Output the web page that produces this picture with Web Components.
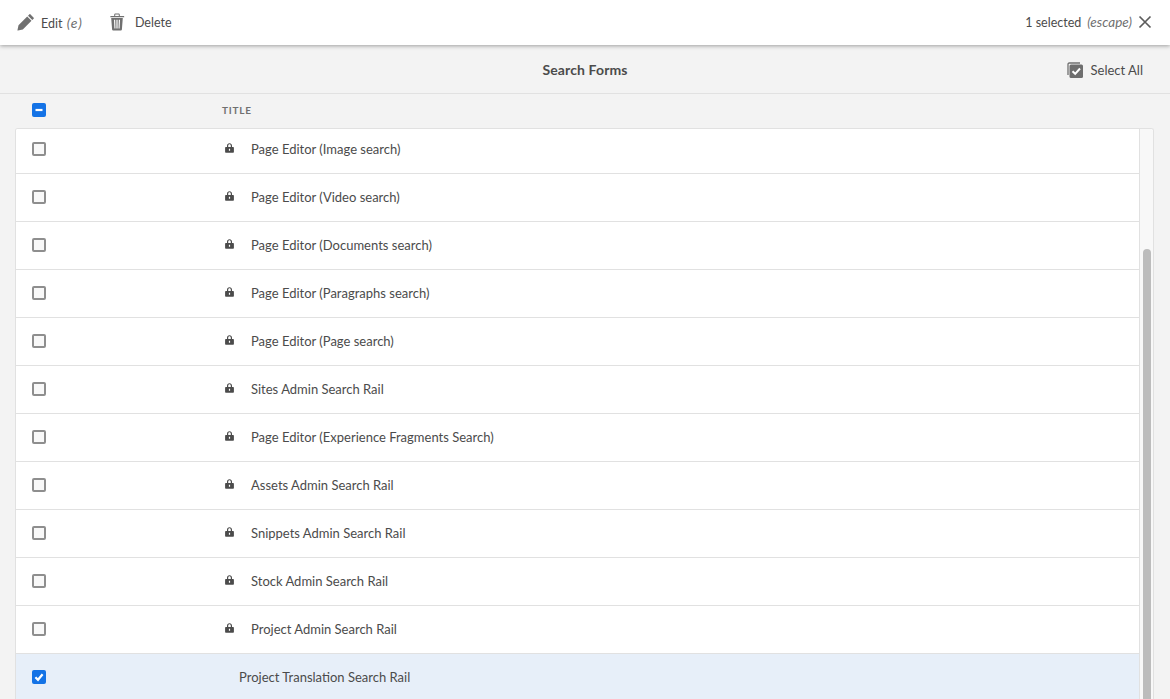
<!DOCTYPE html>
<html><head><meta charset="utf-8"><style>
html,body{margin:0;padding:0;height:699px;overflow:hidden;background:#f3f3f3;font-family:Lato,"Open Sans",sans-serif;color:#4b4b4b}
</style></head><body>
<template id="t-check"><style>
:host{display:block;width:14px;height:14px;position:relative;flex:none}
.b{box-sizing:border-box;width:14px;height:14px;border:2px solid #8e8e8e;border-radius:2px;background:#f8f8f8;display:block}
:host([state]) .b{background:#1473e6;border:none}
svg{position:absolute;left:0;top:0;display:none}
:host([state]) svg{display:block}
</style><span class="b"></span><svg width="14" height="14" viewBox="0 0 14 14"><path fill="none" stroke="#fff" stroke-width="2.2" d=""/></svg></template>
<script>
const tpl=id=>document.getElementById(id).content.cloneNode(true);
class UiCheck extends HTMLElement{connectedCallback(){if(this.shadowRoot)return;const r=this.attachShadow({mode:'open'});r.appendChild(tpl('t-check'));const s=this.getAttribute('state');if(s){r.querySelector('path').setAttribute('d',s==='mixed'?'M3.5 7H10.5':'M3.4 7.2L6 9.8L10.6 4.2');}}}
customElements.define('ui-check',UiCheck);
class UiAction extends HTMLElement{constructor(){super();this.attachShadow({mode:'open'}).innerHTML=`<style>
:host{display:inline-flex;align-items:center;gap:var(--g,6px);font-size:var(--fs,12.5px);color:#4b4b4b;white-space:nowrap}
</style><slot name="icon"></slot><span><slot></slot></span>`}}
customElements.define('ui-action',UiAction);
class ActionBar extends HTMLElement{constructor(){super();this.attachShadow({mode:'open'}).innerHTML=`<style>
:host{display:flex;align-items:center;height:45px;background:#fff;box-shadow:0 1px 4px rgba(0,0,0,.35);position:relative;z-index:2;padding:0 18px 1px 17px;box-sizing:border-box;justify-content:space-between}
.l,.r{display:flex;align-items:center}
.l{gap:25px}
.r{gap:6px;font-size:12.5px;color:#4b4b4b}
</style><div class="l"><slot name="left"></slot></div><div class="r"><slot name="right"></slot></div>`}}
customElements.define('action-bar',ActionBar);
class TitleBar extends HTMLElement{constructor(){super();this.attachShadow({mode:'open'}).innerHTML=`<style>
:host{display:grid;grid-template-columns:minmax(0,1fr) auto minmax(0,1fr);align-items:center;height:49px;box-sizing:border-box;border-bottom:1px solid #e1e1e1;background:#f3f3f3;padding:1px 27px 0}
.t{font-size:14px;font-weight:700;letter-spacing:.12px;color:#4b4b4b}
.a{justify-self:end;display:flex}
</style><span></span><span class="t"><slot></slot></span><span class="a"><slot name="action"></slot></span>`}}
customElements.define('title-bar',TitleBar);
class ColHead extends HTMLElement{constructor(){super();this.attachShadow({mode:'open'}).innerHTML=`<style>
:host{display:flex;align-items:center;height:34px;padding:0 0 2px 32px;box-sizing:border-box}
.t{margin-left:176px;font-size:10px;font-weight:700;letter-spacing:.8px;color:#707070}
</style><slot name="check"></slot><span class="t"><slot></slot></span>`}}
customElements.define('col-head',ColHead);
class FormList extends HTMLElement{constructor(){super();this.attachShadow({mode:'open'}).innerHTML=`<style>
:host{display:flex;margin:0 16px 0 15px;height:571px;box-sizing:border-box;border:1px solid #e1e1e1;border-bottom:none;border-radius:3px 3px 0 0;background:#fff;overflow:hidden}
.list{flex:1;min-width:0;overflow:hidden}
.in{margin-top:-3px}
.track{width:14px;flex:none;background:#f8f8f8;border-left:1px solid #e1e1e1;padding:120px 2px 0 3px;box-sizing:border-box}
.thumb{height:100%;background:#bcbcbc;border-radius:4px 4px 0 0}
</style><div class="list"><div class="in"><slot></slot></div></div><div class="track"><div class="thumb"></div></div>`}}
customElements.define('form-list',FormList);
class FormRow extends HTMLElement{connectedCallback(){if(this.shadowRoot)return;const sel=this.hasAttribute('selected');const lock=!sel;this.attachShadow({mode:'open'}).innerHTML=`<style>
:host{display:flex;align-items:center;height:48px;box-sizing:border-box;border-bottom:1px solid #e1e1e1;padding:0 0 1px 16px;font-size:13px;color:#4b4b4b;background:#fff}
:host([selected]){background:#e7eff9;border-bottom-color:#e7eff9}
.cell{margin-left:${lock?'178px':'193px'};display:flex;align-items:center}
svg{display:block;margin:-2px 17px 0 1px;flex:none}
</style><ui-check ${sel?'state="checked"':''}></ui-check><div class="cell">${lock?'<svg width="9" height="10" viewBox="0 0 9 10"><path fill="#4b4b4b" fill-rule="evenodd" d="M2 4V2.800C2 1.200 3 .2 4.500 .2S7 1.200 7 2.800V4h1.200c.4 0 .7.3.7.7v4.400c0 .4-.3.7-.7.7H.8c-.4 0-.7-.3-.7-.7V4.700c0-.4.3-.7.7-.7zM3.200 4h2.600V2.800c0-.9-.5-1.500-1.300-1.500S3.200 1.900 3.200 2.800zM3.900 5.800v2h1.200v-2z"/></svg>':''}<span><slot></slot></span></div>`}}
customElements.define('form-row',FormRow);
</script>
<action-bar>
<ui-action slot="left"><svg slot="icon" width="18" height="18" viewBox="0 0 18 18"><path fill="#707070" d="M13.300 1.300l3.400 3.400c.3.300.3.600.1.800L15.300 7 11 2.700l1.500-1.500c.2-.2.500-.1.800.1zM10.200 3.500l4.300 4.300-8.700 8.700-4.900 1.100c-.3.050-.5-.15-.45-.45L1.500 12.200z"/></svg><span>Edit <i style="color:#707070;font-size:14px;letter-spacing:1px;margin-left:1px">(e)</i></span></ui-action>
<ui-action slot="left" style="--g:9px"><svg slot="icon" width="18" height="18" viewBox="0 0 18 18"><path fill="#707070" fill-rule="evenodd" d="M6.200 1.800C6.200 1 6.800.6 7.500.6h3c.7 0 1.300.4 1.300 1.200V3h3.900c.3 0 .5.200.5.500v.7H2.300v-.7c0-.3.200-.5.500-.5h3.400zM7.200 3h3.600V1.900c0-.2-.1-.3-.3-.3h-3c-.2 0-.3.100-.3.300zM3.200 5h11.600l-.9 11.500c-.05.600-.45.900-1 .9H5.100c-.55 0-.95-.3-1-.9zM6 6.800l.4 8.800h1.100L7.200 6.800zM8.400 6.800v8.800h1.200V6.800zM10.800 6.800l-.3 8.800h1.100l.4-8.800z"/></svg>Delete</ui-action>
<span slot="right">1 selected</span><i slot="right" style="color:#707070;font-size:13.5px">(escape)</i>
<svg slot="right" width="14" height="14" viewBox="0 0 14 14" style="margin-left:0"><path fill="none" stroke="#5c5c5c" stroke-width="1.700" d="M1.500 1.500L12.500 12.500M12.500 1.500L1.500 12.500"/></svg>
</action-bar>
<title-bar>Search Forms
<ui-action slot="action" style="--g:7px;--fs:13px"><svg slot="icon" width="18" height="18" viewBox="0 0 18 18"><path fill="none" stroke="#707070" stroke-width="1.300" d="M2 14V3.200C2 2.500 2.500 2 3.200 2H14"/><rect x="3.500" y="3.500" width="13.500" height="13.500" rx="1.500" fill="#6e6e6e"/><path fill="none" stroke="#fff" stroke-width="2" d="M6.500 10.200L9.200 12.800L14 7.500"/></svg>Select All</ui-action>
</title-bar>
<col-head><ui-check slot="check" state="mixed"></ui-check>TITLE</col-head>
<form-list>
<form-row>Page Editor (Image search)</form-row>
<form-row>Page Editor (Video search)</form-row>
<form-row>Page Editor (Documents search)</form-row>
<form-row>Page Editor (Paragraphs search)</form-row>
<form-row>Page Editor (Page search)</form-row>
<form-row>Sites Admin Search Rail</form-row>
<form-row>Page Editor (Experience Fragments Search)</form-row>
<form-row>Assets Admin Search Rail</form-row>
<form-row>Snippets Admin Search Rail</form-row>
<form-row>Stock Admin Search Rail</form-row>
<form-row>Project Admin Search Rail</form-row>
<form-row selected>Project Translation Search Rail</form-row>
</form-list>
</body></html>
